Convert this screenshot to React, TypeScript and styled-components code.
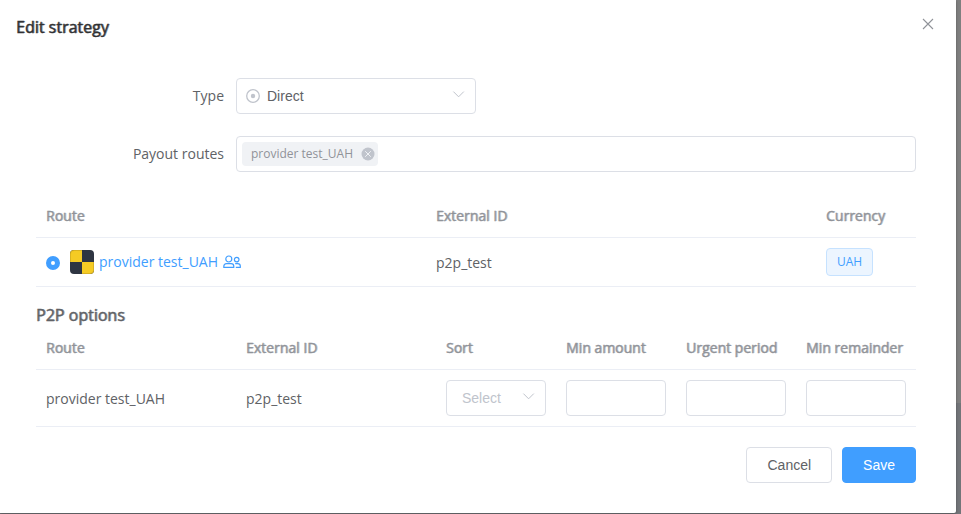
import React, { useState } from "react";
import styled, { createGlobalStyle, css } from "styled-components";

const GlobalStyle = createGlobalStyle`
  *, *::before, *::after { box-sizing: border-box; }
  body {
    margin: 0;
    font-family: "Open Sans", "Noto Sans", sans-serif;
    font-size: 14px;
    color: #606266;
    background: #737579;
  }
`;

const Backdrop = styled.div`
  min-height: 100vh;
  padding: 0 5px 1px 0;
  background: linear-gradient(#7f7f7f 403px, #737579 403px);
`;

const Dialog = styled.section`
  min-height: calc(100vh - 1px);
  background: #fff;
  border-radius: 0 0 2px 0;
  box-shadow: 0 1px 3px rgba(0, 0, 0, 0.3);
`;

const Header = styled.header`
  display: flex;
  align-items: flex-start;
  justify-content: space-between;
  padding: 16px 20px 0 16px;
  height: 58px;
`;

const heavy = css`
  font-weight: 400;
  -webkit-text-stroke: thin currentColor;
  text-shadow: 1px 0 0 color-mix(in srgb, currentColor 50%, transparent);
`;

const Title = styled.h1`
  ${heavy}
  margin: 0;
  font-size: 16px;
  line-height: 22px;
  color: #303133;
`;

const CloseButton = styled.button`
  display: flex;
  padding: 0;
  border: 0;
  background: none;
  color: #909399;
  cursor: pointer;
`;

const Body = styled.form`
  padding: 20px 40px 30px 36px;
`;

const Field = styled.div`
  display: flex;
  margin-bottom: 22px;
`;

const Label = styled.label`
  flex: 0 0 200px;
  padding-right: 12px;
  text-align: right;
  line-height: 36px;
`;

const box = css`
  height: 36px;
  border: 1px solid #dcdfe6;
  border-radius: 4px;
  background: #fff;
`;

const SelectWrap = styled.div<{ $wide?: boolean }>`
  display: grid;
  align-items: center;
  width: ${(p) => (p.$wide ? "240px" : "100%")};

  > * { grid-area: 1 / 1; }
  > svg { pointer-events: none; }
`;

const Select = styled.select<{ $withIcon?: boolean; $muted?: boolean }>`
  ${box}
  width: 100%;
  padding: 0 30px 0 ${(p) => (p.$withIcon ? "30px" : "15px")};
  appearance: none;
  font: 14px "Liberation Sans", Arial, sans-serif;
  color: ${(p) => (p.$muted ? "#c0c4cc" : "#606266")};
`;

const Chevron = styled.svg`
  justify-self: end;
  margin: 0 10px 4px 0;
  width: 14px;
  height: 14px;
`;

const LeadIcon = styled.svg`
  margin-left: 10px;
  width: 14px;
  height: 14px;
`;

const TagBox = styled.div`
  ${box}
  flex: 1;
  display: flex;
  align-items: center;
  gap: 6px;
  padding: 0 5px;
`;

const Tag = styled.span`
  display: flex;
  align-items: center;
  gap: 8px;
  height: 24px;
  padding: 0 3px 0 9px;
  border-radius: 4px;
  background: #f0f2f5;
  color: #909399;
  font-size: 12px;
  line-height: 16px;
`;

const TagRemove = styled.button`
  display: flex;
  padding: 0;
  border: 0;
  background: none;
  cursor: pointer;
`;

const TagInput = styled.input`
  flex: 1;
  min-width: 0;
  border: 0;
  outline: 0;
  background: none;
`;

const Table = styled.table`
  width: 100%;
  table-layout: fixed;
  border-collapse: separate;
  border-spacing: 0;
`;

const Th = styled.th<{ $width?: number }>`
  ${heavy}
  width: ${(p) => (p.$width ? `${p.$width}px` : "auto")};
  height: 44px;
  padding: 0 10px;
  text-align: left;
  line-height: 20px;
  color: #909399;
  border-bottom: 1px solid #ebeef5;
`;

const Td = styled.td`
  height: 49px;
  padding: 10px;
  line-height: 23px;
  border-bottom: 1px solid #ebeef5;
`;

const RouteCell = styled.div`
  display: flex;
  align-items: center;
  line-height: 20px;
`;

const Radio = styled.input`
  appearance: none;
  width: 14px;
  height: 14px;
  margin: 2px 10px 0 0;
  border: 5px solid #409eff;
  border-radius: 50%;
  background: #fff;
`;

const Logo = styled.svg`
  width: 24px;
  height: 24px;
  margin-right: 5px;
`;

const RouteLink = styled.a`
  display: flex;
  align-items: center;
  gap: 5px;
  color: #409eff;
  text-decoration: none;
`;

const Currency = styled.span`
  display: block;
  width: fit-content;
  padding: 0 10px;
  border: 1px solid #c6e2ff;
  border-radius: 4px;
  background: #ecf5ff;
  color: #409eff;
  font-size: 12px;
  line-height: 26px;
`;

const Subtitle = styled.h2`
  ${heavy}
  margin: 17px 0 0;
  font-size: 16px;
  line-height: 22px;
`;

const TextInput = styled.input`
  ${box}
  display: block;
  width: 100%;
  padding: 0 15px;
  font: 14px "Liberation Sans", Arial, sans-serif;
  color: #606266;
`;

const Footer = styled.footer`
  display: flex;
  justify-content: flex-end;
  gap: 10px;
  margin-top: 20px;
`;

const Button = styled.button<{ $primary?: boolean }>`
  height: 36px;
  padding: 0 20px;
  border: 1px solid ${(p) => (p.$primary ? "#409eff" : "#dcdfe6")};
  border-radius: 4px;
  background: ${(p) => (p.$primary ? "#409eff" : "#fff")};
  color: ${(p) => (p.$primary ? "#fff" : "#606266")};
  font: 14px "Liberation Sans", Arial, sans-serif;
  cursor: pointer;
`;

const Arrow = () => (
  <Chevron viewBox="0 0 14 14" fill="none" stroke="#c0c4cc" aria-hidden="true">
    <path d="M1.4 4.6 6.6 9.8l5.2-5.2" />
  </Chevron>
);

const Users = () => (
  <svg width="18" height="14" viewBox="0 0 18 14" fill="none" stroke="currentColor" strokeWidth="1.2" aria-hidden="true">
    <circle cx="5.8" cy="4" r="3" />
    <path d="M.8 12.4v-1c0-1.8 1-2.8 2.7-2.8h4.6c1.7 0 2.7 1 2.7 2.8v1z" strokeLinejoin="round" />
    <circle cx="13.7" cy="4.6" r="2.3" />
    <path d="M12.2 8.7h2.5c1.6 0 2.6.9 2.6 2.4v1.3h-4.5" strokeLinejoin="round" />
  </svg>
);

const numericFields = ["Min amount", "Urgent period", "Min remainder"];

export default function App() {
  const [routes, setRoutes] = useState(["provider test_UAH"]);

  return (
    <>
      <GlobalStyle />
      <Backdrop>
        <Dialog role="dialog" aria-labelledby="dialog-title">
          <Header>
            <Title id="dialog-title">Edit strategy</Title>
            <CloseButton type="button" aria-label="Close">
              <svg width="16" height="16" viewBox="0 0 16 16" fill="none" stroke="currentColor" strokeWidth="1.1">
                <path d="m3 3 10 10M13 3 3 13" />
              </svg>
            </CloseButton>
          </Header>
          <Body onSubmit={(e) => e.preventDefault()}>
            <Field>
              <Label htmlFor="type">Type</Label>
              <SelectWrap $wide>
                <Select id="type" $withIcon defaultValue="direct">
                  <option value="direct">Direct</option>
                </Select>
                <LeadIcon viewBox="0 0 14 14" aria-hidden="true">
                  <circle cx="7" cy="7" r="6.3" fill="none" stroke="#c0c4cc" strokeWidth="1.3" />
                  <circle cx="7" cy="7" r="2.2" fill="#c0c4cc" />
                </LeadIcon>
                <Arrow />
              </SelectWrap>
            </Field>
            <Field>
              <Label htmlFor="routes">Payout routes</Label>
              <TagBox>
                {routes.map((route) => (
                  <Tag key={route}>
                    {route}
                    <TagRemove
                      type="button"
                      aria-label={`Remove ${route}`}
                      onClick={() => setRoutes(routes.filter((r) => r !== route))}
                    >
                      <svg width="14" height="14" viewBox="0 0 14 14">
                        <circle cx="7" cy="7" r="6.5" fill="#c0c4cc" />
                        <path d="m4.2 4.2 5.6 5.6M9.8 4.2 4.2 9.8" stroke="#f0f2f5" />
                      </svg>
                    </TagRemove>
                  </Tag>
                ))}
                <TagInput id="routes" />
              </TagBox>
            </Field>
            <Table>
              <thead>
                <tr>
                  <Th>Route</Th>
                  <Th>External ID</Th>
                  <Th $width={100}>Currency</Th>
                </tr>
              </thead>
              <tbody>
                <tr>
                  <Td>
                    <RouteCell>
                      <Radio type="radio" name="route" aria-label="provider test_UAH" defaultChecked />
                      <Logo viewBox="0 0 24 24" aria-hidden="true">
                        <rect width="24" height="24" rx="4" fill="#2e3542" />
                        <path d="M4 0h8v12H0V4a4 4 0 0 1 4-4Z" fill="#d9b222" />
                        <path d="M4 1h8v11H1V4a3 3 0 0 1 3-3Z" fill="#f5cb24" />
                        <path d="M12 12h12v8a4 4 0 0 1-4 4h-8Z" fill="#d9b222" />
                        <path d="M12 12h11v8a3 3 0 0 1-3 3h-8Z" fill="#f5cb24" />
                      </Logo>
                      <RouteLink href="#route">
                        provider test_UAH
                        <Users />
                      </RouteLink>
                    </RouteCell>
                  </Td>
                  <Td>p2p_test</Td>
                  <Td><Currency>UAH</Currency></Td>
                </tr>
              </tbody>
            </Table>
            <Subtitle>P2P options</Subtitle>
            <Table>
              <thead>
                <tr>
                  <Th>Route</Th>
                  <Th>External ID</Th>
                  <Th $width={120}>Sort</Th>
                  {numericFields.map((name) => <Th key={name} $width={120}>{name}</Th>)}
                </tr>
              </thead>
              <tbody>
                <tr>
                  <Td>provider test_UAH</Td>
                  <Td>p2p_test</Td>
                  <Td>
                    <SelectWrap>
                      <Select $muted aria-label="Sort" defaultValue="">
                        <option value="">Select</option>
                      </Select>
                      <Arrow />
                    </SelectWrap>
                  </Td>
                  {numericFields.map((name) => (
                    <Td key={name}><TextInput aria-label={name} /></Td>
                  ))}
                </tr>
              </tbody>
            </Table>
            <Footer>
              <Button type="button">Cancel</Button>
              <Button type="submit" $primary>Save</Button>
            </Footer>
          </Body>
        </Dialog>
      </Backdrop>
    </>
  );
}
